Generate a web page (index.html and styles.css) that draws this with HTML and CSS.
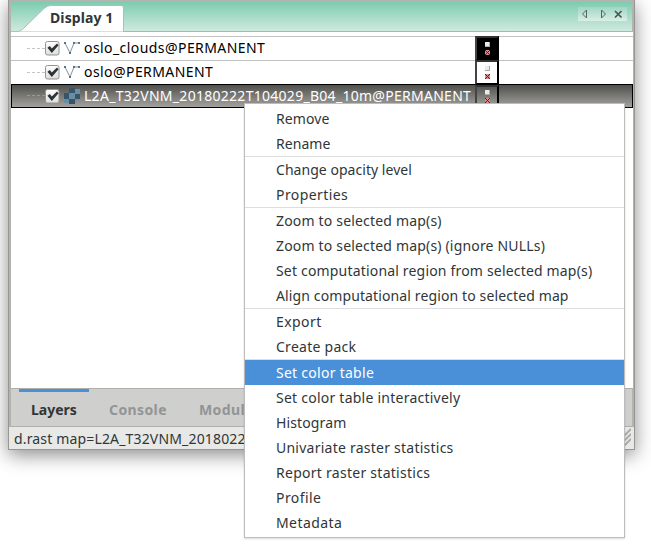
FILE: index.html
```html
<!DOCTYPE html>
<html lang="en">
<head>
<meta charset="utf-8">
<title>Layer Manager</title>
<link rel="stylesheet" href="styles.css">
</head>
<body>
<svg class="defs" width="0" height="0">
  <defs>
    <linearGradient id="box" x1="0" y1="0" x2="0" y2="1"><stop offset="0" stop-color="#fff"/><stop offset="1" stop-color="#dededc"/></linearGradient>
    <symbol id="check" viewBox="0 0 15 15"><rect x=".5" y=".5" width="13.5" height="13.5" rx="2" fill="url(#box)" stroke="#94948f"/><path d="M2.4 6.7 4.8 5 6.8 7.4 12 2.400 13.600 4.300 6.800 12Z" fill="#2c3437"/></symbol>
    <symbol id="vector" viewBox="0 0 16 16"><path d="M1 3 6 13 10 3H15" fill="none" stroke="#8194a4"/><path d="M0 2h2v2H0zM5 12h2v2H5zM9 2h2v2H9zM14 2h2v2h-2z" fill="#58748a"/></symbol>
    <symbol id="raster" viewBox="0 0 16 16"><path d="M5 0h6v16H5zM0 5h16v6H0z" fill="#597990"/><path d="M5 0h6v5H5zM0 5h5v6H0zM11 6h5v5h-5zM5 11h6v5H5z" fill="#34566d"/><path d="M11 1h5v5h-5zM5 5h6v6H5zM0 11h5v4H0z" fill="#6c8ca1"/></symbol>
    <symbol id="opacity" viewBox="0 0 6 14"><path d="M0 0h5v5H0z" fill="#aaa"/><path d="M0 0h4v4H0z" fill="#ebebeb"/><path d="M0 8h5v5H0z" fill="#d98c8c"/><path d="M0 8h1v1H0zM4 8h1v1H4zM1 9h1v1H1zM3 9h1v1H3zM2 10h1v1H2zM1 11h1v1H1zM3 11h1v1H3zM0 12h1v1H0zM4 12h1v1H4z" fill="#a40000"/></symbol>
  </defs>
</svg>
<main class="window">
  <header class="tabstrip">
    <svg class="tab" width="114" height="30" viewBox="0 0 114 30"><path d="M0 29.500H7C10 29 12 27 14 25L33 6.500Q36 3.500 40 3.500H110Q112.500 3.500 112.500 6V30H0Z" fill="#fff" stroke="#aec0b8"/></svg>
    <span class="tab-label">Display 1</span>
    <svg class="tab-controls" width="49" height="14" viewBox="0 0 49 14"><path d="M8.500 3v8L4.500 7Z M23.500 3v8L27.500 7Z" fill="none" stroke="#53665f"/><path d="m37 4 6.500 6.500m0-6.500L37 10.500" stroke="#4c5552" stroke-width="1.700"/></svg>
  </header>
  <section class="layers">
    <div class="row"><i class="branch"></i><svg class="check"><use href="#check"/></svg><svg class="icon"><use href="#vector"/></svg><span class="name wide">oslo_clouds@PERMANENT</span><span class="opacity dark"><svg><use href="#opacity"/></svg></span></div>
    <div class="row"><i class="branch"></i><svg class="check"><use href="#check"/></svg><svg class="icon"><use href="#vector"/></svg><span class="name wide">oslo@PERMANENT</span><span class="opacity"><svg><use href="#opacity"/></svg></span></div>
    <div class="row selected"><i class="branch"></i><svg class="check"><use href="#check"/></svg><svg class="icon"><use href="#raster"/></svg><span class="name">L2A_T32VNM_20180222T104029_B04_10m@PERMANENT</span><span class="opacity clear"><svg><use href="#opacity"/></svg></span></div>
  </section>
  <nav class="pages"><span class="page active">Layers</span><span class="page">Console</span><span class="page">Modules</span></nav>
  <footer class="status"><span>d.rast map=L2A_T32VNM_20180222</span><svg class="grip" width="14" height="20" viewBox="0 0 14 20"><path d="M7 9 14 2M7 14l7-7M7 19l7-7" stroke="#a9aaa7" stroke-width="1.800"/></svg></footer>
</main>
<div class="menu" role="menu">
  <div class="item snug">Remove</div>
  <div class="item tight">Rename</div>
  <hr>
  <div class="item tight">Change opacity level</div>
  <div class="item loose">Properties</div>
  <hr>
  <div class="item">Zoom to selected map(s)</div>
  <div class="item">Zoom to selected map(s) (ignore NULLs)</div>
  <div class="item">Set computational region from selected map(s)</div>
  <div class="item snug">Align computational region to selected map</div>
  <hr>
  <div class="item loose">Export</div>
  <div class="item roomy">Create pack</div>
  <hr>
  <div class="item hot roomy">Set color table</div>
  <div class="item even">Set color table interactively</div>
  <div class="item snug">Histogram</div>
  <div class="item even">Univariate raster statistics</div>
  <div class="item roomy">Report raster statistics</div>
  <div class="item loose">Profile</div>
  <div class="item loose">Metadata</div>
</div>
</body>
</html>
```

FILE: styles.css
```css
* { box-sizing: border-box; }
html, body { height: 549px; overflow: hidden; }
body { margin: 0; background: #fff; font: 14px/24px "Noto Sans", sans-serif; color: #303638; }
.defs { position: absolute; }
svg { display: block; flex: none; }
.window { width: 627px; height: 450px; margin-left: 8px; border: solid #979792; border-width: 0 1px 1px; background: #b3b3af; box-shadow: 0 5px 18px rgba(0,0,0,.45); display: flex; flex-direction: column; }
.tabstrip { height: 32px; margin: 0 2px; border-top: 2px solid #b3b3af; border-bottom: 1px solid #aeb4b0; background: linear-gradient(#7dccb0, #cfeadf); display: flex; flex: none; align-items: flex-start; justify-content: space-between; position: relative; }
.tab-label { position: absolute; left: 39px; top: 4px; font-weight: 700; letter-spacing: .1px; white-space: nowrap; }
.tab-controls { margin: 5px 5px 0 0; background: linear-gradient(#9ed7c3, #daeee7); }
.layers { height: 356px; margin: 0 1px 0 2px; padding-top: 4px; background: #fff; flex: none; }
.row { height: 24px; border-top: 1px solid #c1c1c1; display: flex; align-items: center; color: #000; }
.branch { width: 18px; margin: 0 0 1px 16px; border-top: 1px dashed #c6c6c6; }
.check { width: 15px; height: 15px; margin-bottom: 1px; }
.icon { width: 16px; height: 16px; margin: 0 0 1px 4px; }
.name { width: 391px; margin-left: 4px; height: 24px; line-height: 22px; white-space: nowrap; letter-spacing: .28px; }
.name.wide { letter-spacing: .43px; }
.row .opacity { width: 24px; height: 25px; border: 2px solid #000; border-left-color: #444; border-top-color: #333; display: flex; justify-content: center; align-items: flex-start; }
.opacity svg { width: 6px; height: 14px; margin: 4px 0 0 1px; }
.dark { background: #000; }
.selected { border: 1px solid #000; background: linear-gradient(#50504d, #a3a29e); color: #fff; }
.selected .branch { margin-left: 15px; border-color: #999; }
.selected .check { margin-bottom: 0; }
.selected .icon { margin-bottom: 0; }
.selected .name { line-height: 24px; }
.selected .opacity { height: 22px; border-bottom: 0; }
.selected .opacity svg { margin-top: 3px; }
.pages { height: 39px; margin: 0 2px; border: solid #afafac; border-width: 1px 0; background: #cfcfcd; display: flex; padding-left: 8px; flex: none; font-weight: 700; color: #929595; line-height: 35px; overflow: hidden; letter-spacing: .4px; }
.page { padding: 0 12px; margin-right: 8px; border-top: 3px solid transparent; }
.page.active { width: 70px; border-color: #4a90d9; color: #303638; letter-spacing: 0; }
.status { height: 22px; background: #e8e8e6; display: flex; justify-content: space-between; flex: none; padding: 0 3px 0 5px; line-height: 23px; overflow: hidden; letter-spacing: .16px; }
.menu { position: absolute; left: 244px; top: 103px; width: 381px; height: 435px; padding: 2px 0; border: 1px solid #bcbcbc; background: #fff; box-shadow: 0 1px 2px rgba(0,0,0,.15); }
.menu hr { margin: 0; border: 0; height: 1px; background: #dedede; }
.item { height: 25px; line-height: 25px; padding-left: 31px; white-space: nowrap; letter-spacing: .18px; }
.tight { letter-spacing: .04px; }
.snug { letter-spacing: .12px; }
.even { letter-spacing: .24px; }
.roomy { letter-spacing: .27px; }
.loose { letter-spacing: .42px; }
.hot { background: #4a90d9; color: #fff; }
```
